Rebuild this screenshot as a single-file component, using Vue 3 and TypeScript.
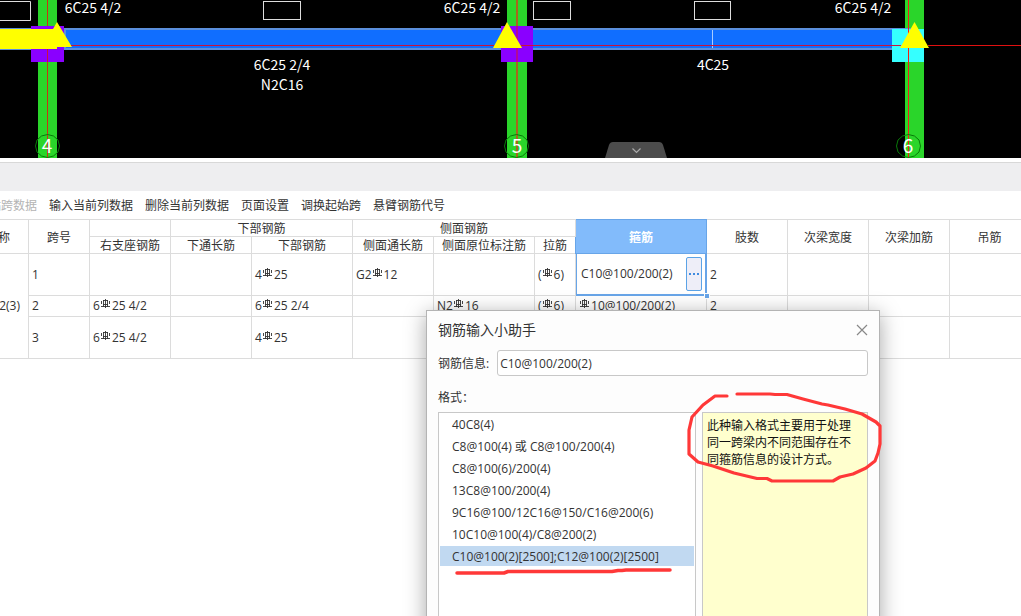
<script setup lang="ts">
import { ref } from 'vue'

interface Span {
  no: string
  height: string
  cells: string[]
}

const tools = ['输入当前列数据', '删除当前列数据', '页面设置', '调换起始跨', '悬臂钢筋代号']

// "#" stands for the rebar grade symbol
const spans: Span[] = [
  { no: '1', height: 'tall', cells: ['', '', '4#25', 'G2#12', '', '(#6)', '', '2', '', '', ''] },
  { no: '2', height: 'short', cells: ['6#25 4/2', '', '6#25 2/4', '', 'N2#16', '(#6)', '#10@100/200(2)', '2', '', '', ''] },
  { no: '3', height: 'tall', cells: ['6#25 4/2', '', '4#25', '', '', '', '', '', '', '', ''] },
]

const stirrup = ref('C10@100/200(2)')

const formats = [
  '40C8(4)',
  'C8@100(4) 或 C8@100/200(4)',
  'C8@100(6)/200(4)',
  '13C8@100/200(4)',
  '9C16@100/12C16@150/C16@200(6)',
  '10C10@100(4)/C8@200(2)',
  'C10@100(2)[2500];C12@100(2)[2500]',
]
const selected = ref(6)
</script>

<template>
  <main class="app">
    <svg class="drawing" viewBox="0 0 1021 158" preserveAspectRatio="xMidYMid slice" role="img" aria-label="梁平面图">
      <rect width="1021" height="158" fill="#000" />
      <g fill="#2ad52a">
        <rect x="38" y="0" width="19" height="158" />
        <rect x="507" y="0" width="20" height="158" />
        <rect x="905" y="0" width="19" height="158" />
      </g>
      <path d="M47.500 0V158" stroke="#c83214" />
      <rect x="0" y="28" width="914" height="22" fill="#5b8fdc" />
      <rect x="0" y="30" width="905" height="18" fill="#106eff" />
      <rect x="31" y="26" width="33" height="36" fill="#8a00ff" />
      <rect x="64" y="28" width="2" height="22" fill="#5b8fdc" />
      <rect x="501" y="26" width="32" height="36" fill="#8a00ff" />
      <rect x="892" y="29" width="32" height="33" fill="#35ffff" />
      <rect x="712" y="30" width="1" height="18" fill="#a8ccff" />
      <path d="M47.500 48V62" stroke="#c8143c" />
      <path d="M516 0h2v158h-2z" fill="#a8641e" />
      <path d="M516 26h2v36h-2z" fill="#b00a96" />
      <path d="M908 0h1v158h-1z" fill="#f02014" />
      <path d="M0 29H53L57 22L72 47H57V49H0Z" fill="#ff0" />
      <path d="M507 22L522 48H493Z" fill="#ff0" />
      <path d="M914.500 22L929 48H900Z" fill="#ff0" />
      <path d="M71 45.500H494M521 45.500H901" stroke="#c8143c" />
      <path d="M928 45.500H1021" stroke="#e01010" />
      <g fill="none" stroke="#ddd">
        <path d="M-1 1.500H30.500V20.500H-1" />
        <rect x="263.500" y="1.500" width="37" height="18" />
        <rect x="533.500" y="1.500" width="37" height="18" />
        <rect x="694.500" y="1.500" width="36" height="18" />
      </g>
      <g fill="none" stroke="#087a08">
        <path id="axis" d="M47.500 134.500l6 1.500 4.500 4 1.500 6-1.500 6-4.500 4-6 1.500-6-1.500-4.500-4-1.500-6 1.500-6 4.500-4z" />
        <use href="#axis" x="469" />
        <use href="#axis" x="861" />
      </g>
      <g class="note">
        <text x="93" y="13">6C25 4/2</text>
        <text x="472" y="13">6C25 4/2</text>
        <text x="863" y="13">6C25 4/2</text>
        <text x="282" y="70">6C25 2/4</text>
        <text x="282" y="90">N2C16</text>
        <text x="713" y="70">4C25</text>
      </g>
      <g class="axis-no">
        <text x="47" y="153">4</text>
        <text x="517" y="153">5</text>
        <text x="908" y="153">6</text>
      </g>
      <path d="M605 158L609 145Q610 142 613 142H659Q662 142 663 145L667 158Z" fill="#4c4c4c" />
      <path d="M632.500 148.500l4 4 4-4" fill="none" stroke="#aaa" stroke-width="1.200" />
    </svg>

    <div class="band"></div>

    <nav class="toolbar">
      <button type="button" disabled>粘贴跨数据</button>
      <button v-for="t in tools" :key="t" type="button">{{ t }}</button>
    </nav>

    <div class="grid">
      <table>
        <colgroup>
          <col class="c61" /><col class="c61" /><col class="c81" /><col class="c81" /><col class="c101" />
          <col class="c81" /><col class="c101" /><col class="c41" /><col class="c131" /><col class="c81" />
          <col class="c81" /><col class="c81" /><col />
        </colgroup>
        <thead>
          <tr>
            <th rowspan="2">名称</th>
            <th rowspan="2">跨号</th>
            <th></th>
            <th colspan="2">下部钢筋</th>
            <th colspan="3">侧面钢筋</th>
            <th rowspan="2" class="active">箍筋</th>
            <th rowspan="2">肢数</th>
            <th rowspan="2">次梁宽度</th>
            <th rowspan="2">次梁加筋</th>
            <th rowspan="2">吊筋</th>
          </tr>
          <tr>
            <th>右支座钢筋</th>
            <th>下通长筋</th>
            <th>下部钢筋</th>
            <th>侧面通长筋</th>
            <th>侧面原位标注筋</th>
            <th>拉筋</th>
          </tr>
        </thead>
        <tbody>
          <tr v-for="(s, r) in spans" :key="s.no" :class="s.height">
            <td v-if="r === 0" rowspan="3" class="member">KL2(3)</td>
            <td>{{ s.no }}</td>
            <td v-for="(c, i) in s.cells" :key="i" :class="{ editing: r === 0 && i === 6 }">
              <div v-if="r === 0 && i === 6" class="editor">
                <input v-model="stirrup" aria-label="箍筋" />
                <button type="button" aria-label="更多">
                  <svg width="12" height="2" viewBox="0 0 12 2"><path d="M1 0h2v2H1zM5 0h2v2H5zM9 0h2v2H9z" fill="#3f8be0" /></svg>
                </button>
                <i class="handle"></i>
              </div>
              <template v-else>
                <template v-for="(part, k) in c.split('#')" :key="k">
                  <svg v-if="k > 0" class="rebar" width="11" height="9" viewBox="0 0 11 9" aria-label="三级钢">
                    <path d="M5.500 0V9M3 1.500H8M3 5.500H8M1.500 2V5M9.500 2V5M3.500 1V8M7.500 1V8M1 7.500H10" fill="none" stroke="#333" stroke-width="0.900" />
                  </svg>{{ part }}
                </template>
              </template>
            </td>
          </tr>
        </tbody>
      </table>
    </div>

    <section class="dialog" role="dialog" aria-labelledby="dlg-title">
      <header>
        <h2 id="dlg-title">钢筋输入小助手</h2>
        <button type="button" class="close" aria-label="关闭">
          <svg width="12" height="12" viewBox="0 0 12 12"><path d="M1 1L11 11M11 1L1 11" fill="none" stroke="#888" stroke-width="1.200" /></svg>
        </button>
      </header>
      <div class="field">
        <label for="info">钢筋信息:</label>
        <input id="info" v-model="stirrup" />
      </div>
      <p class="caption">格式：</p>
      <div class="body">
        <ul role="listbox" aria-label="格式">
          <li v-for="(f, i) in formats" :key="f" role="option" :aria-selected="i === selected" :class="{ on: i === selected }" @click="selected = i">{{ f }}</li>
        </ul>
        <p class="tip">此种输入格式主要用于处理同一跨梁内不同范围存在不同箍筋信息的设计方式。</p>
      </div>
      <svg class="marks" width="452" height="305" viewBox="427 311 452 305" aria-hidden="true">
        <g fill="none" stroke="#ff3838" stroke-linecap="round" stroke-linejoin="round">
          <path stroke-width="3.500" d="M457 573H504L508 571.500H612L618 570.500H622L626 570H670" />
          <path stroke-width="3.200" d="M727 396H715L703 405L692 417L689 430V454L698 462L713 466L734 473L757 478.500H767L772 481H833L840 477L853 474L866 468L875 461L878 453L880 444V426L876 422L862 414L845 409L828 405L822 404L803 399L787 394.500H775L770 394H737" />
        </g>
      </svg>
    </section>
  </main>
</template>

<style>
body {
  overflow: hidden;
}
</style>

<style scoped>
.app {
  position: relative;
  height: 100vh;
  overflow: hidden;
  background: #fff;
  color: #333;
  font: 12px/16px "Open Sans", "Noto Sans CJK SC", sans-serif;
}
button,
input {
  margin: 0;
  padding: 0;
  border: 0;
  background: none;
  color: inherit;
  font: inherit;
}
.drawing {
  display: block;
  width: 100%;
  height: 158px;
}
.note {
  fill: #fff;
  font: 14px "Noto Sans CJK SC", sans-serif;
  text-anchor: middle;
}
.axis-no {
  fill: #fff;
  font: 19px "Noto Sans CJK SC", sans-serif;
  text-anchor: middle;
}
.band {
  height: 28px;
  margin-top: 4px;
  border-top: 1px solid #d8d8d8;
  background: #eeeef0;
}
.toolbar {
  display: flex;
  gap: 12px;
  box-sizing: border-box;
  height: 28px;
  margin-left: -23px;
  padding-top: 2px;
}
.toolbar button {
  white-space: nowrap;
}
.toolbar button:disabled {
  color: #b4b4b4;
}
.grid {
  margin-left: -33px;
  overflow: hidden;
}
table {
  width: calc(100% + 9px);
  border-collapse: collapse;
  table-layout: fixed;
}
.c41 { width: 41px; }
.c61 { width: 61px; }
.c81 { width: 81px; }
.c101 { width: 101px; }
.c131 { width: 131px; }
th,
td {
  box-sizing: border-box;
  padding: 0 3px;
  border: 1px solid #dcdcdc;
  white-space: nowrap;
}
th {
  height: 17px;
  padding: 2px 0 0;
  font-weight: normal;
  line-height: 14px;
}
th.active {
  border-color: #68a5e8;
  background: #82bbfb;
  color: #fff;
  font-weight: bold;
}
.tall td { height: 42px; }
.short td { height: 21px; }
td.member {
  padding-right: 8px;
  text-align: right;
}
.rebar {
  margin: 0 1px 0 0;
  vertical-align: 2px;
}
td.editing {
  padding: 0;
  border-color: #68a5e8;
}
.editor {
  position: relative;
  display: flex;
  align-items: center;
  box-sizing: border-box;
  height: 41px;
  padding: 0 3px 0 4px;
  border: 1px solid #68a5e8;
  border-top: 0;
}
.editor input {
  flex: 1;
  min-width: 0;
}
.editor button {
  display: flex;
  align-items: center;
  justify-content: center;
  width: 16px;
  height: 34px;
  border: 1px solid #5ba3e6;
  border-radius: 2px;
  background: #eeeef8;
}
.handle {
  position: absolute;
  right: -5px;
  bottom: -5px;
  width: 4px;
  height: 4px;
  border: 1px solid #fff;
  background: #68a5e8;
}
.dialog {
  position: absolute;
  top: 310px;
  bottom: -20px;
  left: 426px;
  display: flex;
  flex-direction: column;
  box-sizing: border-box;
  width: 454px;
  padding: 0 11px;
  border: 1px solid #b4b4b4;
  background: #fdfdfd;
  box-shadow: 0 4px 20px rgba(0, 0, 0, 0.35);
}
header {
  display: flex;
  align-items: center;
  justify-content: space-between;
  height: 37px;
}
h2 {
  margin: 0;
  font-size: 14px;
  font-weight: normal;
}
.close {
  display: flex;
}
.field {
  display: flex;
  align-items: center;
  gap: 8px;
  margin-top: 2px;
}
.field label {
  padding-top: 2px;
}
.field input {
  flex: 1;
  box-sizing: border-box;
  min-width: 0;
  height: 26px;
  padding: 0 2px;
  border: 1px solid #c8c8c8;
  border-radius: 3px;
  background: #fff;
}
.caption {
  margin: 14px 0 6px;
}
.body {
  display: flex;
  flex: 1;
  gap: 6px;
}
ul {
  flex: 1;
  margin: 0;
  padding: 1px;
  border: 1px solid #c8c8c8;
  background: #fff;
  list-style: none;
}
li {
  box-sizing: border-box;
  height: 20px;
  margin-bottom: 2px;
  padding: 2px 0 0 12px;
  line-height: 18px;
}
li.on {
  background: #c1d9f1;
}
.tip {
  box-sizing: border-box;
  width: 166px;
  margin: 0;
  padding: 4px 14px 4px 4px;
  border: 1px solid #c8c8c8;
  background: #ffffce;
  color: #111;
  line-height: 17px;
}
.marks {
  position: absolute;
  top: 0;
  left: 0;
  overflow: visible;
  pointer-events: none;
}
</style>
